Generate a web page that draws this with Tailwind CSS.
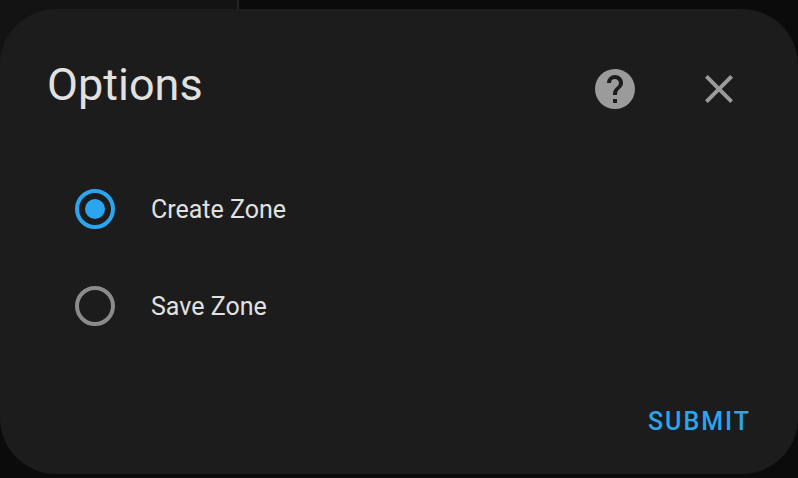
<!DOCTYPE html>
<html lang="en">
<head>
<meta charset="utf-8">
<title>Options</title>
<script src="https://cdn.jsdelivr.net/npm/@tailwindcss/browser@4"></script>
</head>
<body class="min-h-screen bg-[#0b0b0b] font-[Roboto,sans-serif] text-[#e1e1e1]">
<div class="flex h-[69px]"><div class="w-[239px] border-r-2 border-[#242424] bg-[#131313]"></div></div>
<main role="dialog" aria-labelledby="title" class="relative -mt-[60px] rounded-[56px] bg-[#1c1c1c] pb-8">
  <header class="flex items-center justify-between px-[47px] pt-12">
    <h1 id="title" class="text-[45px] leading-[56px]">Options</h1>
    <div class="flex items-center gap-14 pt-2 pr-2">
      <button aria-label="Help" class="text-[#9b9b9b]"><svg class="size-12" viewBox="0 0 24 24" fill="currentColor"><path d="M15.07,11.25L14.17,12.17C13.45,12.89 13,13.5 13,15H11V14.5C11,13.39 11.45,12.39 12.17,11.67L13.41,10.41C13.78,10.05 14,9.55 14,9C14,7.89 13.1,7 12,7A2,2 0 0,0 10,9H8A4,4 0 0,1 12,5A4,4 0 0,1 16,9C16,9.88 15.64,10.67 15.07,11.25M13,19H11V17H13M12,2A10,10 0 0,0 2,12A10,10 0 0,0 12,22A10,10 0 0,0 22,12C22,6.47 17.5,2 12,2Z"/></svg></button>
      <button aria-label="Close" class="text-[#9b9b9b]"><svg class="size-12" viewBox="0 0 24 24" fill="currentColor"><path d="M19,6.41L17.59,5L12,10.59L6.41,5L5,6.41L10.59,12L5,17.59L6.41,19L12,13.41L17.59,19L19,17.59L13.41,12L19,6.41Z"/></svg></button>
    </div>
  </header>
  <form>
    <div class="flex flex-col items-start gap-[55px] px-[75px] pt-[75px]">
      <label class="flex items-center gap-9 text-[25px] leading-10"><input type="radio" name="option" checked class="size-10 appearance-none rounded-full border-4 border-[#8b8b8b] p-[6px] checked:border-[#2ba5ed] checked:bg-[#2ba5ed] checked:bg-clip-content"><span class="pt-0.5">Create Zone</span></label>
      <label class="flex items-center gap-9 text-[25px] leading-10"><input type="radio" name="option" class="size-10 appearance-none rounded-full border-4 border-[#8b8b8b] p-[6px] checked:border-[#2ba5ed] checked:bg-[#2ba5ed] checked:bg-clip-content"><span class="pt-0.5">Save Zone</span></label>
    </div>
    <div class="flex justify-end px-[47px] pt-[75px]"><button type="button" class="text-[25px] leading-10 font-medium tracking-[2px] text-[#2ba5ed]">SUBMIT</button></div>
  </form>
</main>
</body>
</html>
